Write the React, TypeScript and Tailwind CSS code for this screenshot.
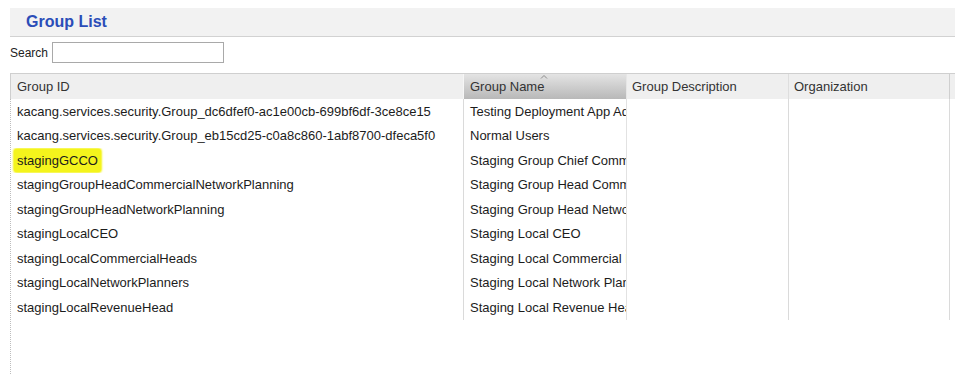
import React from "react";

const rows: [string, string][] = [
  ["kacang.services.security.Group_dc6dfef0-ac1e00cb-699bf6df-3ce8ce15", "Testing Deployment App Admin"],
  ["kacang.services.security.Group_eb15cd25-c0a8c860-1abf8700-dfeca5f0", "Normal Users"],
  ["stagingGCCO", "Staging Group Chief Commercial Officer"],
  ["stagingGroupHeadCommercialNetworkPlanning", "Staging Group Head Commercial Network Planning"],
  ["stagingGroupHeadNetworkPlanning", "Staging Group Head Network Planning"],
  ["stagingLocalCEO", "Staging Local CEO"],
  ["stagingLocalCommercialHeads", "Staging Local Commercial Heads"],
  ["stagingLocalNetworkPlanners", "Staging Local Network Planners"],
  ["stagingLocalRevenueHead", "Staging Local Revenue Head"],
];

const SortCaret = () => (
  <svg className="absolute left-[70px] top-[-3px]" width="8" height="5" viewBox="0 0 8 5" fill="none" stroke="#8a8a8a" strokeWidth="1">
    <path d="M1 4.5 4 1.5 7 4.5" />
  </svg>
);

export default function App() {
  return (
    <div className="h-[374px] overflow-hidden bg-white pl-[10px] flex flex-col text-[#1c1c1c]" style={{ fontFamily: '"Liberation Sans", Arial, sans-serif' }}>
      {/* Title bar */}
      <div className="mt-[8px] h-[29px] shrink-0 bg-[#f2f2f2] border-b border-[#d2d2d2] flex items-center pl-[16px]">
        <h1 className="text-[16px] font-bold text-[#2b4db8] leading-none">Group List</h1>
      </div>

      {/* Search */}
      <div className="mt-[5px] flex items-center gap-[4px] shrink-0">
        <label className="text-[12px] text-[#222]">Search</label>
        <input className="w-[172px] h-[21px] border border-[#a9a9a9] bg-white outline-none px-1 text-[12px]" />
      </div>

      {/* Table */}
      <div className="mt-[10px] flex-1 flex flex-col min-h-0 text-[13px]">
        <div className="flex h-[26px] shrink-0 border-t border-l border-[#cfcfcf] bg-[#efefef]">
          <div className="w-[452px] shrink-0 pl-[6px] flex items-center text-[#333]">Group ID</div>
          <div className="relative w-[163px] shrink-0 border-l border-[#f6f6f6] bg-gradient-to-b from-[#e4e4e4] to-[#b8b8b8] pl-[6px] flex items-center text-[#333]">
            <span className="relative">
              Group Name
              <SortCaret />
            </span>
          </div>
          <div className="w-[162px] shrink-0 border-l border-[#e6e6e6] pl-[5px] flex items-center text-[#333]">Group Description</div>
          <div className="w-[161px] shrink-0 border-l border-[#dedede] pl-[5px] flex items-center text-[#333]">Organization</div>
          <div className="flex-1 border-l border-[#cfcfcf]" />
        </div>

        <div className="flex-1 border-l border-dotted border-[#bdbdbd]">
          {rows.map(([id, name], i) => (
            <div key={i} className="flex h-[24.5px]">
              <div className="w-[452px] shrink-0 pl-[6px] flex items-center whitespace-nowrap overflow-hidden">
                {id === "stagingGCCO" ? (
                  <span className="-ml-[3px] pl-[3px] pr-[3px] py-[2px] bg-[#f4f41c] rounded-[3px] shadow-[0_0_2px_1px_#f4f41c]">{id}</span>
                ) : (
                  id
                )}
              </div>
              <div className="w-[163px] shrink-0 border-l border-[#dadada] pl-[6px] flex items-center whitespace-nowrap overflow-hidden">{name}</div>
              <div className="w-[162px] shrink-0 border-l border-[#e2e2e2]" />
              <div className="w-[161px] shrink-0 border-l border-[#dadada]" />
              <div className="flex-1 border-l border-[#dadada]" />
            </div>
          ))}
        </div>
      </div>
    </div>
  );
}
